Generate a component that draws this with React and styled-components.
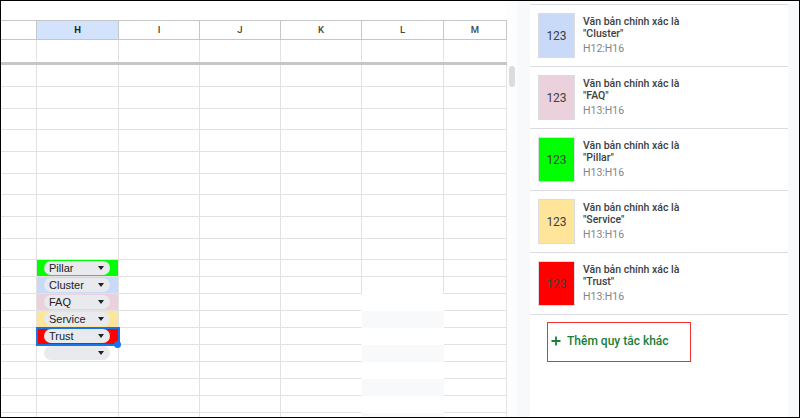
import styled, { createGlobalStyle } from "styled-components";

const GlobalStyle = createGlobalStyle`
  html, body {
    margin: 0;
    padding: 0;
    background: #fff;
  }
  body {
    font-family: Roboto, "Liberation Sans", Arial, sans-serif;
  }
`;

const COLS = "36px 82px 81px 81px 81px 82px 63px";
const LETTERS = ["", "H", "I", "J", "K", "L", "M"];
const UPPER_HEIGHTS = [22, 22, 21, 22, 22, 21, 22, 22, 21];

const TAGS = [
  { label: "Pillar", fill: "#00ff00" },
  { label: "Cluster", fill: "#c9daf8" },
  { label: "FAQ", fill: "#ead1dc" },
  { label: "Service", fill: "#ffe599" },
  { label: "Trust", fill: "#ff0000", selected: true },
  { label: "", fill: null },
  null,
  null,
  null,
  null,
];

const RULES = [
  { value: "Cluster", range: "H12:H16", fill: "#c9daf8" },
  { value: "FAQ", range: "H13:H16", fill: "#ead1dc" },
  { value: "Pillar", range: "H13:H16", fill: "#00ff00" },
  { value: "Service", range: "H13:H16", fill: "#ffe599" },
  { value: "Trust", range: "H13:H16", fill: "#ff0000" },
];

export default function App() {
  return (
    <>
      <GlobalStyle />
      <Frame>
        <Sheet>
          <TopBlank />
          <HeaderRow>
            {LETTERS.map((l, i) => (
              <HeadCell key={i} $active={l === "H"}>
                {l}
              </HeadCell>
            ))}
          </HeaderRow>
          <Row $h={22}>
            {LETTERS.map((_, i) => (
              <Cell key={i} $noBottom />
            ))}
          </Row>
          <FreezeBar />
          {UPPER_HEIGHTS.map((h, r) => (
            <Row key={r} $h={h}>
              {LETTERS.map((_, i) => (
                <Cell key={i} />
              ))}
            </Row>
          ))}
          {TAGS.map((tag, r) => (
            <Row key={"t" + r} $h={17}>
              <Cell />
              <Cell $fill={tag && tag.fill} $selected={tag && tag.selected}>
                {tag && (
                  <Chip>
                    <span>{tag.label}</span>
                    <Caret />
                  </Chip>
                )}
                {tag && tag.selected && <Handle />}
              </Cell>
              <Cell />
              <Cell />
              <Cell $noRight={r >= 2} />
              <Cell
                $noRight={r >= 2}
                $noBottom={r >= 1}
                $fill={r >= 3 && r % 2 === 1 ? "#f8f9fa" : null}
              />
              <Cell />
            </Row>
          ))}
        </Sheet>
        <ScrollTrack>
          <Thumb />
        </ScrollTrack>
        <Gutter />
        <Panel>
          <RuleList>
            {RULES.map((rule) => (
              <RuleItem key={rule.value}>
                <Swatch $fill={rule.fill}>123</Swatch>
                <RuleText>
                  <RuleTitle>Văn bản chính xác là</RuleTitle>
                  <RuleTitle>"{rule.value}"</RuleTitle>
                  <RuleRange>{rule.range}</RuleRange>
                </RuleText>
              </RuleItem>
            ))}
          </RuleList>
          <AddButton>
            <svg width="10" height="10" viewBox="0 0 10 10">
              <path d="M5 0.5v9M0.5 5h9" stroke="#188038" strokeWidth="1.8" />
            </svg>
            <span>Thêm quy tắc khác</span>
          </AddButton>
        </Panel>
        <RightStrip />
      </Frame>
    </>
  );
}

const Frame = styled.div`
  width: 800px;
  height: 418px;
  box-sizing: border-box;
  border: 1px solid #000;
  display: flex;
  overflow: hidden;
  background: #fff;
`;

const Sheet = styled.div`
  width: 506px;
  flex: none;
  display: flex;
  flex-direction: column;
  overflow: hidden;
`;

const TopBlank = styled.div`
  height: 19px;
  flex: none;
`;

const HeaderRow = styled.div`
  display: grid;
  grid-template-columns: ${COLS};
  height: 20px;
  flex: none;
  box-sizing: border-box;
  border-top: 1px solid #c4c7c5;
`;

const HeadCell = styled.div`
  box-sizing: border-box;
  border-right: 1px solid #c4c7c5;
  border-bottom: 1px solid #c4c7c5;
  background: ${(p) => (p.$active ? "#d3e3fd" : "#fff")};
  color: ${(p) => (p.$active ? "#1f1f1f" : "#444746")};
  font: ${(p) => (p.$active ? 700 : 500)} 9.5px/18px Roboto, "Liberation Sans",
    sans-serif;
  text-align: center;
`;

const Row = styled.div`
  display: grid;
  grid-template-columns: ${COLS};
  height: ${(p) => p.$h}px;
  flex: none;
`;

const Cell = styled.div`
  position: relative;
  box-sizing: border-box;
  display: flex;
  align-items: center;
  background: ${(p) => p.$fill || "#fff"};
  border-right: 1px solid ${(p) => (p.$noRight ? "transparent" : "#e2e2e2")};
  border-bottom: 1px solid ${(p) => (p.$noBottom ? "transparent" : "#e2e2e2")};
  ${(p) =>
    p.$selected &&
    `
    outline: 2px solid #1a73e8;
    outline-offset: -1px;
    z-index: 2;
  `}
`;

const FreezeBar = styled.div`
  height: 3px;
  flex: none;
  background: #c6c6c6;
`;

const Chip = styled.div`
  display: flex;
  align-items: center;
  justify-content: space-between;
  width: 66px;
  height: 14px;
  margin-left: 7px;
  padding: 0 6px 0 5px;
  box-sizing: border-box;
  border-radius: 7px;
  background: #e8eaed;
  color: #202124;
  font: 11px/14px "Liberation Sans", Arial, sans-serif;
`;

const Caret = styled.span`
  width: 0;
  height: 0;
  border-left: 3.5px solid transparent;
  border-right: 3.5px solid transparent;
  border-top: 4px solid #202124;
`;

const Handle = styled.span`
  position: absolute;
  right: -3px;
  bottom: -4px;
  width: 7px;
  height: 7px;
  border-radius: 50%;
  background: #1a73e8;
`;

const ScrollTrack = styled.div`
  width: 10px;
  flex: none;
  padding-top: 65px;
  box-sizing: border-box;
  background: #fdfdfd;
`;

const Thumb = styled.div`
  width: 6px;
  height: 21px;
  margin-left: 2px;
  border-radius: 3px;
  background: #dadce0;
`;

const Gutter = styled.div`
  width: 13px;
  flex: none;
  background: #f8f9fa;
`;

const Panel = styled.div`
  width: 258px;
  flex: none;
  padding-top: 3px;
  display: flex;
  flex-direction: column;
  background: #fff;
`;

const RuleList = styled.div`
  border-top: 1px solid #dadce0;
`;

const RuleItem = styled.div`
  display: flex;
  gap: 8px;
  padding: 8px;
  border-bottom: 1px solid #dadce0;
`;

const Swatch = styled.div`
  width: 37px;
  height: 45px;
  flex: none;
  box-sizing: border-box;
  border: 1px solid #dadce0;
  background: ${(p) => p.$fill};
  display: flex;
  align-items: center;
  justify-content: center;
  color: #3c4043;
  font: 400 12px Roboto, sans-serif;
`;

const RuleText = styled.div`
  padding-top: 3px;
  display: flex;
  flex-direction: column;
`;

const RuleTitle = styled.div`
  color: #3c4043;
  font: 500 10.5px/12px Roboto, sans-serif;
`;

const RuleRange = styled.div`
  margin-top: 3px;
  color: #80868b;
  font: 400 10.5px/12px Roboto, sans-serif;
`;

const AddButton = styled.div`
  width: 144px;
  height: 40px;
  margin: 7px 0 0 17px;
  box-sizing: border-box;
  border: 1px solid #ec3232;
  display: flex;
  align-items: center;
  gap: 6px;
  padding: 0 0 3px 3px;
  color: #188038;
  font: 500 12px Roboto, sans-serif;
`;

const RightStrip = styled.div`
  width: 11px;
  flex: none;
  margin-top: 3px;
  background: #f8f9fa;
`;
